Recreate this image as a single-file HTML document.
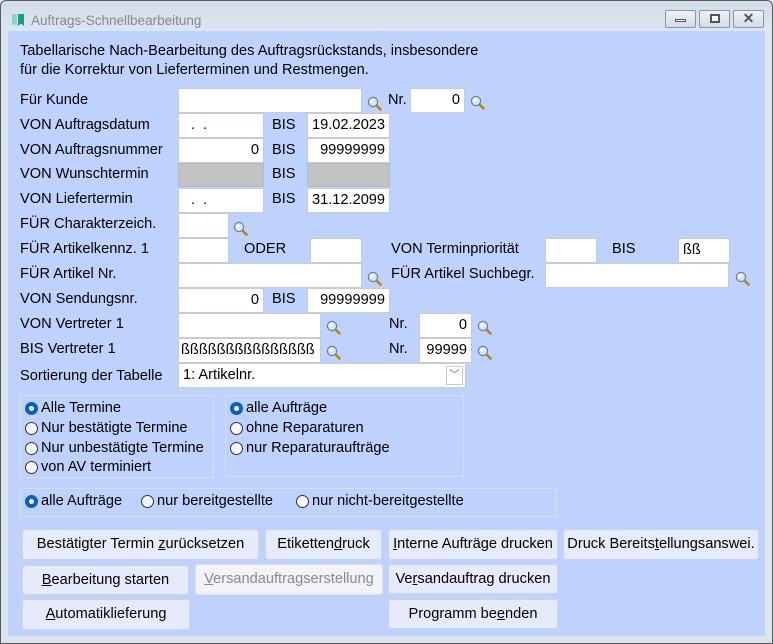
<!DOCTYPE html>
<html><head><meta charset="utf-8"><style>
*{box-sizing:border-box;margin:0;padding:0}
body{width:773px;height:644px;overflow:hidden;background:#dbe5f0;font-family:"Liberation Sans",sans-serif;font-size:14.6px;color:#000;position:relative}
.win{position:absolute;left:0;top:0;width:773px;height:644px;border:1px solid #5b5b5b;border-radius:6px 6px 0 0;background:linear-gradient(#d2dde9,#dce6f1 31px,#dbe5f0 32px)}
.client{position:absolute;left:8px;top:31px;width:757px;height:605px;background:#bfd1fd}
.a{position:absolute}
.l{position:absolute;white-space:nowrap;line-height:16px}
.i{position:absolute;background:#fff;border:1px solid #c5ccd8;height:25px;line-height:23px;padding:0 4px;white-space:nowrap;overflow:hidden}
.r{text-align:right}
.g{background:#c3c3c3;border-color:#a9bcd6}
.m{position:absolute;width:15px;height:15px}
.box{position:absolute;border:1px solid #d6dff3}
.rad{position:absolute;width:13px;height:13px;border-radius:50%;border:1px solid #333;background:#f4f4f4}
.rad.on{background:#0a5fc4;border-color:#0a5fc4}
.rad.on::after{content:"";position:absolute;left:3px;top:3px;width:5px;height:5px;border-radius:50%;background:#fff}
.btn{position:absolute;background:#e6ebfc;border:1px solid #ccd3e4;border-radius:3px;text-align:center;white-space:nowrap}
.btn.dis{background:#f2f3f8;color:#8a8a8a;border-color:#dde0ea}
u{text-decoration:underline}
</style></head><body>
<div class="win">
<svg class="a" style="left:10px;top:12px" width="14" height="14" viewBox="0 0 14 14"><path d="M1 1h5v12l-2.5-2L1 13z" fill="#8fd3c5"/><path d="M7 1h6v12l-3-2.5L7 13z" fill="#1a9c83"/></svg>
<div class="l" style="left:30px;top:12px;color:#888;font-size:13.5px">Auftrags-Schnellbearbeitung</div>
<div class="a" style="left:664px;top:9px;width:31px;height:18px;border:1px solid #8c97a5;border-radius:2px;background:linear-gradient(#eef2f7,#d3dbe5)"><div class="a" style="left:9px;top:8px;width:11px;height:3px;border:1px solid #555;background:#fff"></div></div>
<div class="a" style="left:698px;top:9px;width:31px;height:18px;border:1px solid #8c97a5;border-radius:2px;background:linear-gradient(#eef2f7,#d3dbe5)"><div class="a" style="left:10px;top:3px;width:10px;height:9px;border:2px solid #555;background:#fff"></div></div>
<div class="a" style="left:732px;top:9px;width:31px;height:18px;border:1px solid #8c97a5;border-radius:2px;background:linear-gradient(#eef2f7,#d3dbe5);text-align:center;font-weight:bold;font-size:14px;line-height:15px;color:#555">✕</div>
</div>
<div class="client"></div>

<div class="l" style="left:20px;top:43px">Tabellarische Nach-Bearbeitung des Auftragsrückstands, insbesondere</div>
<div class="l" style="left:20px;top:62px">für die Korrektur von Lieferterminen und Restmengen.</div>

<svg width="0" height="0" style="position:absolute"><defs><symbol id="mg" viewBox="0 0 15 15"><path d="M8.5 8.5l5 5" stroke="#b8860b" stroke-width="2.6" stroke-linecap="round"/><circle cx="6" cy="6" r="4.6" fill="#cfe6f7" stroke="#6c7f95" stroke-width="1.2"/><circle cx="5" cy="5" r="1.8" fill="#fff"/></symbol></defs></svg>

<div class="l" style="left:20px;top:92px">Für Kunde</div>
<div class="i" style="left:178px;top:88px;width:184px"></div>
<svg class="m" style="left:367px;top:96px"><use href="#mg"/></svg>
<div class="l" style="left:388px;top:92px">Nr.</div>
<div class="i r" style="left:410px;top:88px;width:55px">0</div>
<svg class="m" style="left:470px;top:95px"><use href="#mg"/></svg>

<div class="l" style="left:20px;top:117px">VON Auftragsdatum</div>
<div class="i" style="left:178px;top:113px;width:86px;padding-left:12px">.&nbsp;&nbsp;.</div>
<div class="l" style="left:272px;top:117px">BIS</div>
<div class="i" style="left:307px;top:113px;width:83px">19.02.2023</div>

<div class="l" style="left:20px;top:142px">VON Auftragsnummer</div>
<div class="i r" style="left:178px;top:138px;width:86px">0</div>
<div class="l" style="left:272px;top:142px">BIS</div>
<div class="i r" style="left:307px;top:138px;width:83px">99999999</div>

<div class="l" style="left:20px;top:166px">VON Wunschtermin</div>
<div class="i g" style="left:178px;top:163px;width:86px;height:24px"></div>
<div class="l" style="left:272px;top:166px">BIS</div>
<div class="i g" style="left:307px;top:163px;width:83px;height:24px"></div>

<div class="l" style="left:20px;top:191px">VON Liefertermin</div>
<div class="i" style="left:178px;top:188px;width:86px;padding-left:12px">.&nbsp;&nbsp;.</div>
<div class="l" style="left:272px;top:191px">BIS</div>
<div class="i" style="left:307px;top:188px;width:83px">31.12.2099</div>

<div class="l" style="left:20px;top:216px">FÜR Charakterzeich.</div>
<div class="i" style="left:178px;top:213px;width:51px"></div>
<svg class="m" style="left:233px;top:221px"><use href="#mg"/></svg>

<div class="l" style="left:20px;top:241px">FÜR Artikelkennz. 1</div>
<div class="i" style="left:178px;top:238px;width:51px"></div>
<div class="l" style="left:244px;top:241px">ODER</div>
<div class="i" style="left:310px;top:238px;width:52px"></div>
<div class="l" style="left:391px;top:241px">VON Terminpriorität</div>
<div class="i" style="left:545px;top:238px;width:52px"></div>
<div class="l" style="left:612px;top:241px">BIS</div>
<div class="i" style="left:678px;top:238px;width:52px">ßß</div>

<div class="l" style="left:20px;top:266px">FÜR Artikel Nr.</div>
<div class="i" style="left:178px;top:263px;width:184px"></div>
<svg class="m" style="left:367px;top:271px"><use href="#mg"/></svg>
<div class="l" style="left:391px;top:266px">FÜR Artikel Suchbegr.</div>
<div class="i" style="left:545px;top:263px;width:184px"></div>
<svg class="m" style="left:735px;top:271px"><use href="#mg"/></svg>

<div class="l" style="left:20px;top:291px">VON Sendungsnr.</div>
<div class="i r" style="left:178px;top:288px;width:86px">0</div>
<div class="l" style="left:272px;top:291px">BIS</div>
<div class="i r" style="left:307px;top:288px;width:83px">99999999</div>

<div class="l" style="left:20px;top:316px">VON Vertreter 1</div>
<div class="i" style="left:178px;top:313px;width:143px"></div>
<svg class="m" style="left:326px;top:320px"><use href="#mg"/></svg>
<div class="l" style="left:389px;top:316px">Nr.</div>
<div class="i r" style="left:419px;top:313px;width:53px">0</div>
<svg class="m" style="left:477px;top:320px"><use href="#mg"/></svg>

<div class="l" style="left:20px;top:341px">BIS Vertreter 1</div>
<div class="i" style="left:178px;top:338px;width:143px;padding-left:2px">ßßßßßßßßßßßßßßß</div>
<svg class="m" style="left:326px;top:345px"><use href="#mg"/></svg>
<div class="l" style="left:389px;top:341px">Nr.</div>
<div class="i r" style="left:419px;top:338px;width:53px">99999</div>
<svg class="m" style="left:477px;top:345px"><use href="#mg"/></svg>

<div class="l" style="left:20px;top:368px">Sortierung der Tabelle</div>
<div class="i" style="left:178px;top:363px;width:288px;height:25px">1: Artikelnr.</div>
<div class="a" style="left:446px;top:366px;width:17px;height:19px;border:1px solid #ccc;background:#fff;text-align:center;font-size:10px;line-height:17px;color:#555">﹀</div>

<div class="box" style="left:20px;top:395px;width:194px;height:83px"></div>
<div class="rad on" style="left:25px;top:402px"></div><div class="l" style="left:41px;top:400px">Alle Termine</div>
<div class="rad" style="left:25px;top:422px"></div><div class="l" style="left:41px;top:420px">Nur bestätigte Termine</div>
<div class="rad" style="left:25px;top:442px"></div><div class="l" style="left:41px;top:440px">Nur unbestätigte Termine</div>
<div class="rad" style="left:25px;top:461px"></div><div class="l" style="left:41px;top:459px">von AV terminiert</div>

<div class="box" style="left:225px;top:395px;width:239px;height:82px"></div>
<div class="rad on" style="left:230px;top:402px"></div><div class="l" style="left:246px;top:400px">alle Aufträge</div>
<div class="rad" style="left:230px;top:422px"></div><div class="l" style="left:246px;top:420px">ohne Reparaturen</div>
<div class="rad" style="left:230px;top:442px"></div><div class="l" style="left:246px;top:440px">nur Reparaturaufträge</div>

<div class="box" style="left:20px;top:488px;width:537px;height:29px"></div>
<div class="rad on" style="left:25px;top:495px"></div><div class="l" style="left:41px;top:493px">alle Aufträge</div>
<div class="rad" style="left:141px;top:495px"></div><div class="l" style="left:157px;top:493px">nur bereitgestellte</div>
<div class="rad" style="left:296px;top:495px"></div><div class="l" style="left:312px;top:493px">nur nicht-bereitgestellte</div>

<div class="btn" style="left:22px;top:529px;width:237px;height:31px;line-height:29px">Bestätigter Termin <u>z</u>urücksetzen</div>
<div class="btn" style="left:265px;top:529px;width:117px;height:31px;line-height:29px">Etiketten<u>d</u>ruck</div>
<div class="btn" style="left:388px;top:529px;width:170px;height:31px;line-height:29px"><u>I</u>nterne Aufträge drucken</div>
<div class="btn" style="left:563px;top:529px;width:196px;height:31px;line-height:29px">Druck Bereits<u>t</u>ellungsanswei.</div>
<div class="btn" style="left:22px;top:565px;width:167px;height:30px;line-height:28px"><u>B</u>earbeitung starten</div>
<div class="btn dis" style="left:195px;top:564px;width:188px;height:31px;line-height:29px"><u>V</u>ersandauftragserstellung</div>
<div class="btn" style="left:388px;top:564px;width:170px;height:30px;line-height:28px">Ve<u>r</u>sandauftrag drucken</div>
<div class="btn" style="left:22px;top:599px;width:168px;height:31px;line-height:29px"><u>A</u>utomatiklieferung</div>
<div class="btn" style="left:388px;top:599px;width:170px;height:30px;line-height:28px">Programm be<u>e</u>nden</div>
</body></html>
